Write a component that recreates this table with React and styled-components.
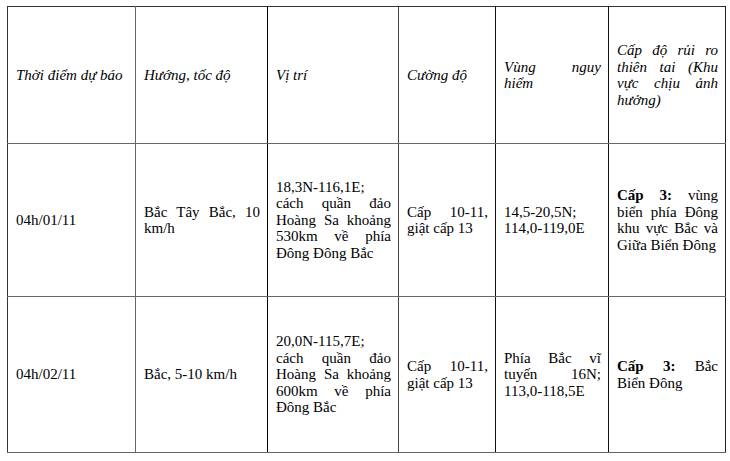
import styled, { createGlobalStyle } from "styled-components";

const GlobalStyle = createGlobalStyle`
  body {
    margin: 0;
    background: #fff;
  }
`;

const Page = styled.div`
  padding: 6px 0 0 7px;
  width: 730px;
  height: 461px;
  box-sizing: border-box;
  background: #fff;
`;

const Table = styled.table`
  border-collapse: collapse;
  table-layout: fixed;
  width: 718px;
  font-family: "Liberation Serif", "Times New Roman", serif;
  font-size: 15px;
  line-height: 16.5px;
  color: #000;
  border-top: 1px solid #333;
`;

const Row = styled.tr`
  height: ${(props) => props.h}px;
`;

const Cell = styled.td`
  box-sizing: border-box;
  padding: 0 7px 0 8px;
  vertical-align: middle;
  text-align: justify;
  font-style: ${(props) => (props.head ? "italic" : "normal")};
  border-left: 1px solid ${(props) => props.line || "#555"};
  border-right: ${(props) => (props.last ? "1px solid #222" : "none")};
  border-bottom: 1px solid #666;
`;

const Strong = styled.b`
  font-weight: bold;
`;

const cols = [128, 132, 131, 97, 113, 117];
const lines = ["#333", "#666", "#000", "#444", "#111", "#111"];

const header = [
  "Thời điểm dự báo",
  "Hướng, tốc độ",
  "Vị trí",
  "Cường độ",
  "Vùng nguy hiểm",
  "Cấp độ rủi ro thiên tai (Khu vực chịu ảnh hưởng)",
];

const rows = [
  {
    h: 153,
    cells: [
      "04h/01/11",
      "Bắc Tây Bắc, 10 km/h",
      "18,3N-116,1E; cách quần đảo Hoàng Sa khoảng 530km về phía Đông Đông Bắc",
      "Cấp 10-11, giật cấp 13",
      "14,5-20,5N; 114,0-119,0E",
      "vùng biển phía Đông khu vực  Bắc và Giữa Biển Đông",
    ],
  },
  {
    h: 156,
    cells: [
      "04h/02/11",
      "Bắc, 5-10 km/h",
      "20,0N-115,7E; cách quần đảo Hoàng Sa khoảng 600km về phía Đông Bắc",
      "Cấp 10-11, giật cấp 13",
      "Phía Bắc vĩ tuyến 16N; 113,0-118,5E",
      "Bắc Biển Đông",
    ],
  },
];

export default function App() {
  return (
    <Page>
      <GlobalStyle />
      <Table>
        <colgroup>
          {cols.map((w, i) => (
            <col key={i} style={{ width: w }} />
          ))}
        </colgroup>
        <tbody>
          <Row h={137}>
            {header.map((t, i) => (
              <Cell key={i} head line={lines[i]} last={i === 5}>
                {t}
              </Cell>
            ))}
          </Row>
          {rows.map((r, ri) => (
            <Row key={ri} h={r.h}>
              {r.cells.map((t, i) => (
                <Cell key={i} line={lines[i]} last={i === 5}>
                  {i === 5 ? (
                    <>
                      <Strong>Cấp 3:</Strong> {t}
                    </>
                  ) : (
                    t
                  )}
                </Cell>
              ))}
            </Row>
          ))}
        </tbody>
      </Table>
    </Page>
  );
}
